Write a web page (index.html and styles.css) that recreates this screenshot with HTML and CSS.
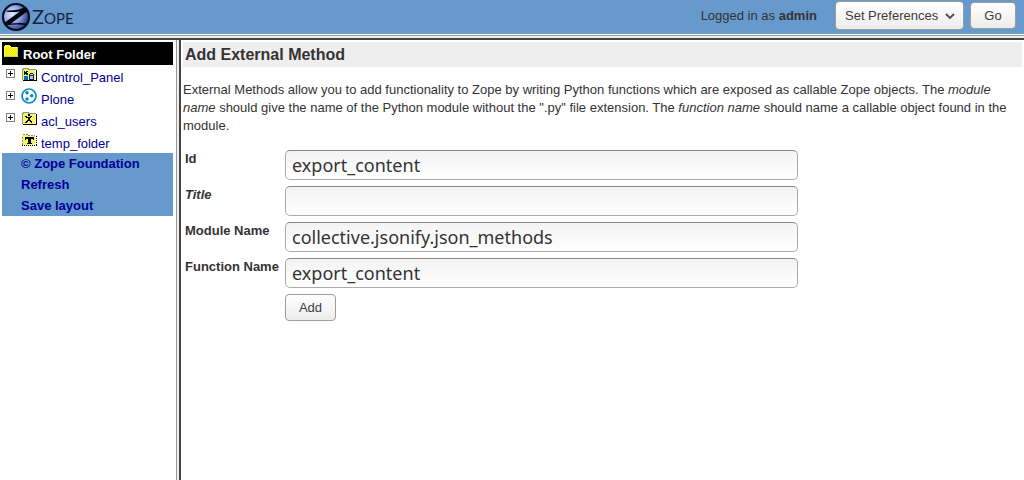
FILE: index.html
```html
<!DOCTYPE html>
<html lang="en">
<head>
<meta charset="utf-8">
<title>Zope</title>
<link rel="stylesheet" href="styles.css">
</head>
<body>
<header class="topbar">
  <a class="logo" href="#" aria-label="Zope">
    <svg class="logo-mark" width="30" height="30" viewBox="0 0 30 30" aria-hidden="true">
      <defs>
        <radialGradient id="orb" cx="0.35" cy="0.4" r="0.65">
          <stop offset="0" stop-color="#e4ecff"/>
          <stop offset="0.5" stop-color="#8fa8e6"/>
          <stop offset="1" stop-color="#27387f"/>
        </radialGradient>
      </defs>
      <circle cx="15" cy="15" r="13" fill="url(#orb)" stroke="#080c20" stroke-width="2.2"/>
      <path d="M6 8.500Q15 9 25 5L27.500 8.500L10 21.500Q19 20.500 26 21.500L25 23Q14 22 4 23.500L3 21L19 9.500Q11 10.500 5 9.500Z" fill="#05070f"/>
    </svg>
    <span class="logo-text">Z<span class="logo-small">OPE</span></span>
  </a>
  <form class="session">
    <span class="who">Logged in as <b>admin</b></span>
    <span class="select-wrap">
      <select class="control prefs" aria-label="Action">
        <option>Set Preferences</option>
        <option>Logout</option>
      </select>
      <svg class="chevron" width="10" height="7" viewBox="0 0 10 7" aria-hidden="true"><path d="M1 1L5 5L9 1" fill="none" stroke="#4c4c4c" stroke-width="1.8"/></svg>
    </span>
    <button class="control go" type="button">Go</button>
  </form>
</header>
<div class="rule"></div>
<div class="frames">
  <nav class="sidebar">
    <a class="root" href="#">
      <svg class="pixel" width="15" height="15" viewBox="0 0 15 15" aria-hidden="true">
        <defs>
          <pattern id="dither" width="2" height="2" patternUnits="userSpaceOnUse"><rect width="2" height="2" fill="#ffff00"/><rect width="1" height="1" fill="#e0e040"/><rect x="1" y="1" width="1" height="1" fill="#e0e040"/></pattern>
          <pattern id="dither-light" width="2" height="2" patternUnits="userSpaceOnUse"><rect width="2" height="2" fill="#ffff20"/><rect width="1" height="1" fill="#ecec98"/><rect x="1" y="1" width="1" height="1" fill="#ecec98"/></pattern>
        </defs>
        <path d="M0 3V2H1V1H6V2H7V3H14V13H0Z" fill="#ffff33"/>
        <path d="M1 4H13V12H1Z" fill="url(#dither)"/>
        <path d="M0 12.500H13.500V3" fill="none" stroke="#d0d030"/>
      </svg>
      <span>Root Folder</span>
    </a>
    <ul class="tree">
      <li>
        <button class="toggle" type="button" aria-label="Expand Control_Panel"></button>
        <svg class="pixel" width="16" height="16" viewBox="0 0 16 16" aria-hidden="true">
          <path d="M1 3H2V1H7V3H14V13H1Z" fill="url(#dither-light)"/>
          <path d="M1.500 13V2.500H2.500V1.500H7.500V2.500H14.500" fill="none" stroke="#909090"/>
          <path d="M2 13.500H15.500V3" fill="none" stroke="#000"/>
          <path d="M3 4H4V5H5V4H7V5H6V6H7V8H5V7H4V8H3Z" fill="#111"/>
          <path d="M3 9H7V13H3Z" fill="#0868b8"/>
          <path d="M8 7H9V6H12V7H13V13H8Z" fill="#18206c"/><path d="M9 7H12V8H9ZM9 9H12V12H9Z" fill="#b4c8dc"/>
        </svg>
        <a href="#">Control_Panel</a>
      </li>
      <li>
        <button class="toggle" type="button" aria-label="Expand Plone"></button>
        <svg width="16" height="16" viewBox="0 0 16 16" aria-hidden="true">
          <circle cx="8" cy="8" r="7" fill="#fff" stroke="#0b93c8" stroke-width="1.7"/>
          <g fill="#0b83be"><circle cx="6" cy="4.800" r="1.700"/><circle cx="10.700" cy="7.800" r="1.700"/><circle cx="6" cy="11" r="1.700"/></g>
        </svg>
        <a href="#">Plone</a>
      </li>
      <li>
        <button class="toggle" type="button" aria-label="Expand acl_users"></button>
        <svg class="pixel" width="16" height="16" viewBox="0 0 16 16" aria-hidden="true">
          <path d="M1 3H2V1H7V3H14V13H1Z" fill="url(#dither-light)"/>
          <path d="M1.500 13V2.500H2.500V1.500H7.500V2.500H14.500" fill="none" stroke="#909090"/>
          <path d="M2 13.500H15.500V3" fill="none" stroke="#000"/>
          <path d="M7 3H9V5H7ZM4 5H6V6H9V5H11V6H10V7H9V9H10V10H11V12H10V11H9V10H7V11H6V12H4V11H5V10H6V9H7V7H5V6H4Z" fill="#000"/>
        </svg>
        <a href="#">acl_users</a>
      </li>
      <li>
        <span class="toggle-space"></span>
        <svg class="pixel" width="16" height="16" viewBox="0 0 16 16" aria-hidden="true">
          <path d="M1 3H2V1H7V3H14V12H1Z" fill="url(#dither-light)"/>
          <path d="M1.500 12V3M2 1.500H7M7 2.500H14" fill="none" stroke="#909090" stroke-dasharray="2 1"/>
          <path d="M1 12.500H16M15.500 3V13" fill="none" stroke="#000" stroke-dasharray="1 1"/>
          <path d="M4 4H13V7H12V6H10V10H11V11H6V10H7V6H5V7H4Z" fill="#000"/>
        </svg>
        <a href="#">temp_folder</a>
      </li>
    </ul>
    <div class="links">
      <a href="#">© Zope Foundation</a>
      <a href="#">Refresh</a>
      <a href="#">Save layout</a>
    </div>
  </nav>
  <div class="divider"></div>
  <main class="content">
    <h1>Add External Method</h1>
    <p class="help">External Methods allow you to add functionality to Zope by writing Python functions which are exposed as callable Zope objects. The <em>module name</em> should give the name of the Python module without the ".py" file extension. The <em>function name</em> should name a callable object found in the module.</p>
    <form class="fields">
      <label for="id">Id</label>
      <input id="id" type="text" value="export_content">
      <label for="title"><em>Title</em></label>
      <input id="title" type="text" value="">
      <label for="module">Module Name</label>
      <input id="module" type="text" value="collective.jsonify.json_methods">
      <label for="function">Function Name</label>
      <input id="function" type="text" value="export_content">
      <button class="control add" type="button">Add</button>
    </form>
  </main>
</div>
</body>
</html>
```

FILE: styles.css
```css
* { box-sizing: border-box; }

body {
  margin: 0;
  min-height: 100vh;
  display: flex;
  flex-direction: column;
  background: #fff;
  color: #333;
  font: 13px/18px "Liberation Sans", Arial, sans-serif;
}

a { color: #000099; text-decoration: none; }
svg { display: block; flex: none; }
.pixel { shape-rendering: crispEdges; }

.topbar {
  display: flex;
  justify-content: space-between;
  align-items: flex-start;
  min-height: 34px;
  background: #6699cc;
}

.logo { display: flex; align-items: center; gap: 1px; padding: 1px; color: #18243e; }
.logo-text { font: 20px/30px Lato, "Open Sans", sans-serif; }
.logo-small { font-size: 15px; }

.session { display: flex; align-items: center; gap: 6px; padding: 1px 8px 0 0; }
.who { margin-right: 12px; }

.control {
  height: 27px;
  padding: 0;
  border: 1px solid #a09c98;
  border-radius: 4px;
  background: linear-gradient(#fff, #ececeb);
  color: #3c3c3c;
  font: inherit;
  text-align: center;
}
.select-wrap { position: relative; }
.prefs {
  appearance: none;
  display: block;
  width: 129px;
  height: 29px;
  padding-left: 9px;
  text-align: left;
}
.chevron { position: absolute; right: 9px; top: 12px; }
.go { width: 46px; }

.rule {
  height: 6px;
  border-bottom: 2px solid #444;
  background: linear-gradient(#fff 1px, #999 1px 2px, #eee 2px);
}

.frames { flex: 1; display: flex; }
.sidebar { width: 175px; padding: 2px; flex: none; }
.divider {
  flex: none;
  width: 6px;
  border-right: 2px solid #444;
  background: linear-gradient(to right, #fff 1px, #999 1px 2px, #eee 2px);
}

.root {
  display: flex;
  gap: 4px;
  height: 23px;
  padding: 2px;
  background: #000;
  color: #fff;
  font-weight: bold;
  line-height: 21px;
}

.tree { margin: 0; padding: 0; list-style: none; }
.tree li {
  display: flex;
  align-items: flex-start;
  gap: 4px;
  height: 22px;
  padding: 1px 4px;
}
.tree a { line-height: 24px; }
.toggle {
  width: 9px;
  height: 9px;
  margin: 3px 2px 0 0;
  padding: 0;
  border: 1px solid #808080;
  background:
    linear-gradient(#000, #000) center / 5px 1px no-repeat,
    linear-gradient(#000, #000) center / 1px 5px no-repeat,
    #fff;
}
.toggle-space { width: 11px; }
.tree .pixel { margin-top: 1px; }

.links { background: #6699cc; padding-left: 19px; }
.links a { display: block; line-height: 21px; font-weight: bold; }

.content { flex: 1; min-width: 0; padding: 2px; }
h1 {
  margin: 0;
  padding: 0 2px;
  background: #eee;
  font-size: 16px;
  line-height: 25px;
}
.help { margin: 14px 0 15px; }

.fields {
  display: grid;
  grid-template-columns: 98px minmax(0, 513px);
  gap: 6px 2px;
  padding: 0 2px;
}
.fields label { font-weight: bold; line-height: 17px; white-space: nowrap; }
.fields input {
  width: 100%;
  height: 30px;
  padding: 0 6px;
  border: 1px solid #aaa;
  border-top-color: #888;
  border-radius: 5px;
  background: linear-gradient(#f3f3f3, #fff);
  color: #333;
  font: 18px "Noto Sans", sans-serif;
}
.add { grid-column: 2; justify-self: start; width: 51px; }
```
